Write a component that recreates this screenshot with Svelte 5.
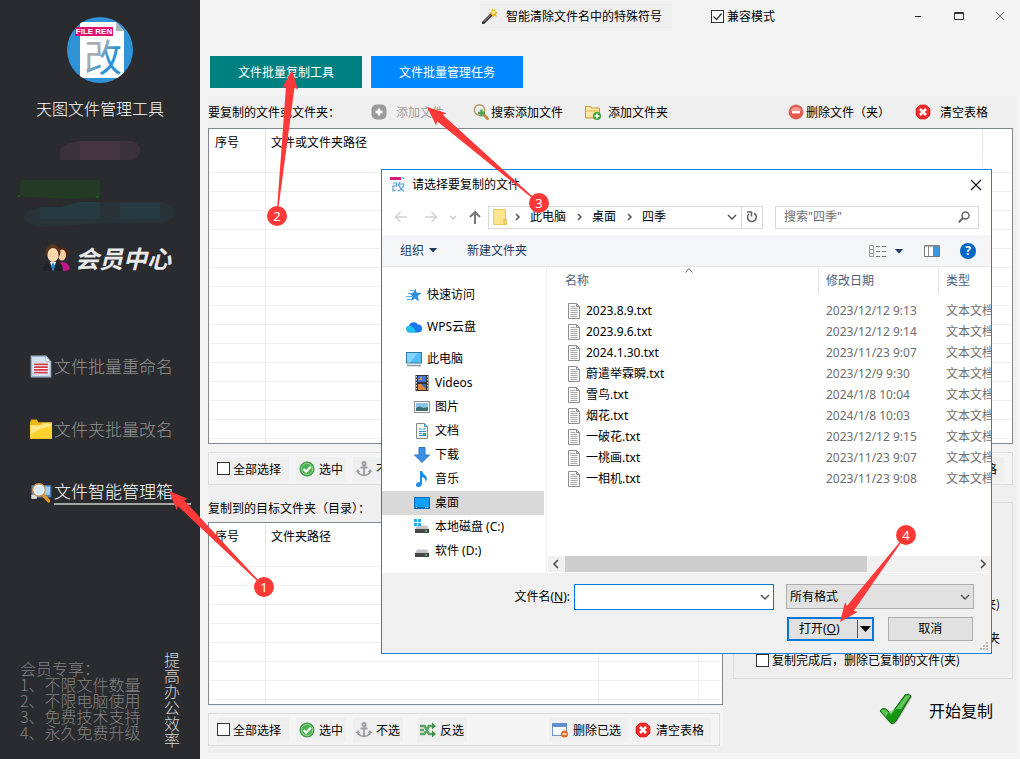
<script>
  const files = [
    ['2023.8.9.txt', '2023/12/12 9:13'],
    ['2023.9.6.txt', '2023/12/12 9:14'],
    ['2024.1.30.txt', '2023/11/23 9:07'],
    ['蔚遣举霖瞬.txt', '2023/12/9 9:30'],
    ['雪鸟.txt', '2024/1/8 10:04'],
    ['烟花.txt', '2024/1/8 10:03'],
    ['一破花.txt', '2023/12/12 9:15'],
    ['一桃画.txt', '2023/11/23 9:07'],
    ['一相机.txt', '2023/11/23 9:08']
  ];
  const places = [
    { icon: 'star', name: '快速访问', root: true },
    { icon: 'cloud', name: 'WPS云盘', root: true },
    { icon: 'pc', name: '此电脑', root: true },
    { icon: 'video', name: 'Videos' },
    { icon: 'picture', name: '图片' },
    { icon: 'doc', name: '文档' },
    { icon: 'down', name: '下载' },
    { icon: 'music', name: '音乐' },
    { icon: 'desktop', name: '桌面', selected: true },
    { icon: 'diskc', name: '本地磁盘 (C:)' },
    { icon: 'disk', name: '软件 (D:)' }
  ];
  const perks = ['1、不限文件数量', '2、不限电脑使用', '3、免费技术支持', '4、永久免费升级'];
  const steps = [
    { n: 1, x: 264, y: 587, tip: [169, 491] },
    { n: 2, x: 277, y: 216, tip: [292, 70] },
    { n: 3, x: 539, y: 203, tip: [427, 107] },
    { n: 4, x: 906, y: 535, tip: [840, 622] }
  ];

  // Tapered arrow from the badge centre to the tip.
  function arrow({ x, y, tip: [tx, ty] }) {
    const d = Math.hypot(x - tx, y - ty);
    const ux = (x - tx) / d, uy = (y - ty) / d;
    const at = (along, side) =>
      `${(tx + ux * along - uy * side).toFixed(1)},${(ty + uy * along + ux * side).toFixed(1)}`;
    return [at(0, 0), at(19, 8), at(17, 4.3), at(d - 9, 0.7), at(d - 9, -0.7), at(17, -4.3), at(19, -8)].join(' ');
  }
</script>

{#snippet icon(name)}
  <svg class="ico" viewBox="0 0 16 16" width="16" height="16" aria-hidden="true">
    {#if name === 'wand'}
      <path d="M1 15 10 6" stroke="#333" stroke-width="3" stroke-linecap="round" /><path d="M2 13.500 9 6.500" stroke="#999" stroke-width="1" />
      <path d="m10 0 1.200 2.200L13.500 1l-.3 2.500L16 4.500l-2.300 1.300L15 8.500l-2.800-.7L10.500 10 10 7 7 5l2.500-1z" fill="#f7b21a" /><circle cx="11.500" cy="4.500" r="1.800" fill="#ffe98a" />
    {:else if name === 'add'}
      <rect x=".5" y=".5" width="15" height="15" rx="5" fill="#9b9b9b" /><path d="M8 4.500v7M4.500 8h7" stroke="#fff" stroke-width="2.400" />
    {:else if name === 'search'}
      <circle cx="6.500" cy="6" r="5.200" fill="#e8f2e8" stroke="#b69a60" stroke-width="1.400" /><path d="m11 11 3.500 3.500" stroke="#c08a4a" stroke-width="3" stroke-linecap="round" /><path d="M8.500 5.500v7M5 9h7" stroke="#4fa552" stroke-width="2.400" />
    {:else if name === 'folderadd'}
      <path d="M.5 2.500h5l1 1.500h8v10H.5z" fill="#fbe9a4" stroke="#c99a2c" /><path d="M1 7h13" stroke="#dcb64d" /><circle cx="12" cy="12" r="4" fill="#3d9a35" /><path d="M12 9.500v5M9.500 12h5" stroke="#fff" stroke-width="1.500" />
    {:else if name === 'minus'}
      <circle cx="8" cy="8" r="7" fill="#e8584a" stroke="#c8695f" /><path d="M2.500 6.500a6 6 0 0 1 11 0q-5 2-11 0" fill="#f39a8d" /><path d="M4 8.200h8" stroke="#fff" stroke-width="2.400" />
    {:else if name === 'clear'}
      <path d="M5 1.200h6L14.800 5v6L11 14.800H5L1.200 11V5z" fill="#f42a2a" stroke="#e01010" /><path d="m5 5 6 6m0-6-6 6" stroke="#fff" stroke-width="2.600" />
    {:else if name === 'ok'}
      <circle cx="8" cy="8" r="7" fill="#4bb04f" stroke="#2f8f3b" /><circle cx="8" cy="8" r="5.600" fill="none" stroke="#a8dba5" stroke-width=".8" /><path d="m4.500 8 2.700 2.700 4.500-5" fill="none" stroke="#fff" stroke-width="2.200" />
    {:else if name === 'anchor'}
      <g fill="none" stroke="#9a9da1" stroke-width="1.800"><circle cx="8" cy="2.700" r="1.700" /><path d="M8 4.500V14M4.500 6.500h7M1.500 9.500Q2 14 8 14.300 14 14 14.500 9.500" /></g><path d="m0 11 2-3 2.200 3zM11.800 11 14 8l2 3z" fill="#9a9da1" />
    {:else if name === 'shuffle'}
      <g fill="none" stroke="#5aa564" stroke-width="2.600"><path d="M0 4h4.500L9 12h4M0 12h4.500L9 4h4M0 8h4" /></g><path d="m12 .5 4 3.500-4 3.500zM12 8.500l4 3.500-4 3.500z" fill="#3f8c4c" />
    {:else if name === 'windel'}
      <rect x=".5" y="1.500" width="14" height="12" fill="#f8fbff" stroke="#6d93c4" /><path d="M0 1h15v4H0z" fill="#5e90cf" /><circle cx="12.500" cy="12" r="3.500" fill="#e36b1c" /><path d="M10.500 12h4" stroke="#fff" stroke-width="1.400" />
    {:else if name === 'star'}
      <path d="m9.500 1.500 1.200 4.300 5 .2-4 3 1.300 5.500L9 11.500 5 14l1.500-4.800L3.200 6l4-.2z" fill="#2e8fdc" /><path d="M0 9.500h6M1 12.500h4M2 6.500h5M4 3.500h4" stroke="#4aaef0" />
    {:else if name === 'cloud'}
      <path d="M3.500 13.500a3.400 3.400 0 0 1-.5-6.700 5 5 0 0 1 9-1.300A4 4 0 0 1 12 13.500z" fill="#1779f2" /><path d="M3.500 13.500a3.400 3.400 0 0 1 0-6.800q4 0 6.500 6.800z" fill="#1fc4ea" />
    {:else if name === 'pc'}
      <rect x=".5" y="1.500" width="15" height="10.500" fill="#54bdf7" stroke="#33789f" /><path d="m6 2 6 0-8 9.500H1V2z" fill="#84d3fb" /><path d="M1 14.500h14" stroke="#8296a5" stroke-width="1.500" />
    {:else if name === 'video'}
      <path d="M1.500 0h13v16h-13z" fill="#333" /><path d="M2.500 1v14M13.500 1v14" stroke="#ddd" stroke-width="1" stroke-dasharray="1.500 1.500" /><path d="M4 1h8v6H4z" fill="#4375d6" /><path d="M4 5h4V1zM4 9h8v6H4z" fill="#e18a35" /><path d="M7 9h5v5z" fill="#3c63c9" />
    {:else if name === 'picture'}
      <path d="M.5 2.500h15v11H.5z" fill="#fff" stroke="#8b8b8b" /><path d="M2 4h12v8H2z" fill="#8cc4ec" /><path d="M2 9q4-3 7 0l5-1v4H2z" fill="#3b6f70" />
    {:else if name === 'doc'}
      <path d="M2.500.5h8l3 3v12h-11z" fill="#fff" stroke="#888" /><path d="M10.500.5v3h3M5 6h3M9 6h3M5 8.500h7M5 10.500h3M5 12.500h7" fill="none" stroke="#2f8fd0" /><path d="M9 10h3v2H9z" fill="#4d9b6a" />
    {:else if name === 'down'}
      <path d="M5 .5h6V8h4.500L8 15.500.5 8H5z" fill="#3a8fe0" stroke="#2d76c0" />
    {:else if name === 'music'}
      <path d="M6 0h2q1 3 4 5 2 3-.5 6Q12 7 8 6v7q-.5 3-3.500 3T2 13.500Q2.500 11 6 11z" fill="#1c8fe8" />
    {:else if name === 'desktop'}
      <path d="M.5 2.500h15v11H.5z" fill="#12a0ff" stroke="#0a6ab5" /><path d="M1 12.500h14" stroke="#0874c8" /><path d="M2 12.500h2M11 12.500h3" stroke="#fff" stroke-dasharray="1 1" />
    {:else if name === 'diskc' || name === 'disk'}
      <path d="m3 6.500h10l2 3.500H1z" fill="#c3c6c8" /><path d="M1 10h14v4H1z" fill="#444" /><path d="M11 12h2" stroke="#4fe05c" stroke-width="1.500" />
      {#if name === 'diskc'}<path d="M0 0h3v3H0zM4 0h3v3H4zM0 4h3v3H0zM4 4h3v3H4z" fill="#1bb1ec" />{/if}
    {:else if name === 'txt'}
      <path d="M2.500.5h8l3 3v12h-11z" fill="#fafafa" stroke="#8c8c8c" /><path d="M10.500.5v3h3" fill="none" stroke="#8c8c8c" /><path d="M4.500 3.500h5M4.500 5.500h7M4.500 7.500h7M4.500 9.500h7M4.500 11.500h7M4.500 13.500h7" stroke="#a9a9a9" />
    {:else if name === 'rename'}
      <path d="M1 .5h10.500l3.500 4v11H1z" fill="#d3e0f2" stroke="#9fb4cf" /><path d="M11.500.5v4H15z" fill="#fff" stroke="#9fb4cf" stroke-width=".6" /><path d="M2.500 5.500h11v8h-11z" fill="#f5f7fb" /><path d="M3 6.500h10M3 8.500h10M3 10.500h10M3 12.500h10" stroke="#d03a4a" stroke-width="1.200" />
    {:else if name === 'folder'}
      <path d="M0 3 1 1h4l1 2h10v12H0z" fill="#efb612" /><path d="M0 5h8l1-1.500h7V15H0z" fill="#ffd22e" /><path d="M.5 5.500H8l1-1.500h6.500v2Q7 7 .5 12z" fill="#ffe98c" />
    {:else if name === 'toolbox'}
      <path d="M1 3h14.500v9H1z" fill="#4d7fb0" /><path d="M9 4h5.500v6H9z" fill="#9fd0f2" /><path d="M1 10h4v3H1z" fill="#ddd" /><path d="m9 9.500 4.500 5" stroke="#e59525" stroke-width="2.400" stroke-linecap="round" /><circle cx="6.500" cy="6.500" r="3.600" fill="#cfeafc" stroke="#eee" stroke-width="1.400" /><circle cx="6.500" cy="6.500" r="4.600" fill="none" stroke="#d59239" stroke-width=".8" />
    {/if}
  </svg>
{/snippet}

{#snippet chev(cls)}
  <svg class="chev {cls}" viewBox="0 0 10 10" width="10" height="10" aria-hidden="true"><path d={cls === 'east small' ? 'm2 4 3 3 3-3' : 'm1 3 4 4 4-4'} fill="none" stroke="currentColor" stroke-width="1.500" /></svg>
{/snippet}

{#snippet grid(cols, heads, rows)}
  <div class="listbox">
    <table>
      <colgroup>{#each cols as c}<col style:width={c} />{/each}</colgroup>
      <thead><tr>{#each heads as h}<th>{h}</th>{/each}</tr></thead>
      <tbody>
        {#each Array(rows) as _}<tr>{#each cols as _c}<td></td>{/each}</tr>{/each}
        <tr class="rest">{#each cols as _c}<td></td>{/each}</tr>
      </tbody>
    </table>
  </div>
{/snippet}

<div class="app">
  <aside>
    <svg class="logo" viewBox="0 0 66 66" width="66" height="66" role="img" aria-label="FILE REN 改">
      <defs>
        <clipPath id="disc"><circle cx="33" cy="33" r="33" /></clipPath>
        <linearGradient id="ink" x1="0" y1="0" x2="1" y2="1"><stop offset=".4" stop-color="#a9adb2" /><stop offset=".6" stop-color="#2f93d8" /></linearGradient>
      </defs>
      <g clip-path="url(#disc)">
        <path d="M0 0h66v66H0z" fill="#2f93d8" />
        <path d="M13 5h36l8 9v47H13z" fill="#fff" /><path d="M49 5v9h8z" fill="#a9b4bb" />
        <path d="M8 10h38v9H8z" fill="#e0116f" />
      </g>
      <text x="27" y="17" text-anchor="middle" class="ren">FILE REN</text>
      <text x="36" y="54" text-anchor="middle" class="gai">改</text>
    </svg>
    <h1>天图文件管理工具</h1>
    <svg class="smudge" viewBox="0 0 200 92" width="200" height="92" aria-hidden="true">
      <path d="M60 10q8-7 20-8h52q8 2 8 9-1 9-8 10H60z" fill="#3b3138" /><path d="M80 2h40v19H80z" fill="#44353e" />
      <path d="M20 43l2-2h78v17l-30 2-50-3z" fill="#233b24" /><path d="M18 57h1.500M96 58h3" stroke="#0b8a0b" />
      <path d="M24 76q2-6 16-7l20-1q20-5 40-5h60q14 3 14 12-2 8-14 9l-70 1-50 3q-18-3-16-12" fill="#293337" /><path d="M40 68h20l20-5h20v17H40zM120 64h40v16h-40z" fill="#263b41" />
    </svg>
    <a class="member" href="#member">
      <svg viewBox="0 0 30 28" width="30" height="28" aria-hidden="true">
        <path d="M16 27q0-9 6-9 6 1 7 7l-4 2z" fill="#c3168a" /><circle cx="21" cy="9" r="6.500" fill="#4a2516" /><ellipse cx="21" cy="11" rx="4" ry="5.500" fill="#f6cda2" />
        <path d="M2 27q0-8 7-10h7q6 2 6 10z" fill="#20232d" /><circle cx="12" cy="8" r="7.500" fill="#5a341d" /><ellipse cx="12" cy="11" rx="5.500" ry="7" fill="#fbd9ae" /><path d="m9 18 3 9 3-9z" fill="#fff" /><path d="m12 18 2 4-2 5-2-5z" fill="#1b86d6" />
      </svg>
      <span>会员中心</span>
    </a>
    <nav>
      <a href="#rename">{@render icon('rename')}<span>文件批量重命名</span></a>
      <a href="#folders">{@render icon('folder')}<span>文件夹批量改名</span></a>
      <a href="#toolbox" class="current">{@render icon('toolbox')}<span>文件智能管理箱</span></a>
    </nav>
    <footer>
      <div class="perks">会员专享：{#each perks as p}<div>{p}</div>{/each}</div>
      <div class="slogan">提高办公效率</div>
    </footer>
  </aside>

  <main>
    <header>
      <button class="clean">{@render icon('wand')}智能清除文件名中的特殊符号</button>
      <label class="check compat"><input type="checkbox" checked />兼容模式</label>
      <div class="winbtns">
        <button aria-label="最小化"><svg viewBox="0 0 10 10" width="10" height="10"><path d="M2 5.500h6" stroke="#222" /></svg></button>
        <button aria-label="最大化"><svg viewBox="0 0 10 10" width="10" height="10"><path d="M.5 1.500h9v7h-9zM0 2.500h10" fill="none" stroke="#333" /></svg></button>
        <button aria-label="关闭"><svg viewBox="0 0 10 10" width="10" height="10"><path d="m1 1 8 8m0-8-8 8" stroke="#666" /></svg></button>
      </div>
    </header>
    <div class="tabs">
      <button class="teal">文件批量复制工具</button>
      <button class="blue">文件批量管理任务</button>
    </div>

    <section class="panel">
      <div class="toolbar">
        <span class="caption">要复制的文件或文件夹：</span>
        <button class="wide" disabled>{@render icon('add')}添加文件</button>
        <button class="tight">{@render icon('search')}搜索添加文件</button>
        <button class="mid">{@render icon('folderadd')}添加文件夹</button>
        <button class="tight right">{@render icon('minus')}删除文件（夹）</button>
        <button class="wide">{@render icon('clear')}清空表格</button>
      </div>
      {@render grid(['56px', 'auto', '28px'], ['序号', '文件或文件夹路径', ''], 15)}
      <div class="strip">
        <div class="actions">
          <label class="check"><input type="checkbox" />全部选择</label>
          <button>{@render icon('ok')}选中</button>
          <button>{@render icon('anchor')}不选</button>
          <button class="right last">{@render icon('clear')}清空表格</button>
        </div>
      </div>
      <div class="lower">
        <div class="targets">
          <div class="caption target">复制到的目标文件夹（目录）：</div>
          {@render grid(['56px', 'auto', '100px', '22px'], ['序号', '文件夹路径', '', ''], 8)}
          <div class="strip narrow">
            <div class="actions">
              <label class="check"><input type="checkbox" />全部选择</label>
              <button>{@render icon('ok')}选中</button>
              <button>{@render icon('anchor')}不选</button>
              <button class="invert">{@render icon('shuffle')}反选</button>
              <button class="right last">{@render icon('windel')}删除已选</button>
              <button class="last">{@render icon('clear')}清空表格</button>
            </div>
          </div>
        </div>
        <div class="side">
          <div class="options">
            <span class="tail">(夹)</span>
            <span class="tail second">夹</span>
            <label class="check"><input type="checkbox" />复制完成后，删除已复制的文件(夹)</label>
          </div>
          <button class="start">
            <svg viewBox="0 0 34 34" width="34" height="34" aria-hidden="true">
              <path d="M2 19q2-5 6-3l5 5L27 3q4-3 6 1L18 29q-4 5-8 0z" fill="#777" opacity=".5" />
              <path d="M1 18q2-4 6-2l5 5L26 2q4-2 6 1L17 28q-4 5-7 0z" fill="#15960f" stroke="#0c6a0c" />
              <path d="M2 18q2-3 5-1l5 5L27 2.500q3-1 4 .8L22 16q-12-1-15 8z" fill="#7fd074" opacity=".75" />
            </svg>
            开始复制
          </button>
        </div>
      </div>
    </section>
  </main>

  <div class="dialog" role="dialog" aria-labelledby="dlg-title">
    <div class="title">
      <svg viewBox="0 0 16 16" width="16" height="16" aria-hidden="true"><path d="M2 1h12v14H2z" fill="#f3f6f9" /><path d="M0 0h11v3H0z" fill="#d81b78" /><path d="m12 0 2 2M3 6h3.500v3H3v5l3-1M10 5 8 8.500M9 7h5q-1 5-6 7M9 8q2 5 5 6" fill="none" stroke="#58a5d8" stroke-width="1.200" /></svg>
      <span id="dlg-title">请选择要复制的文件</span>
      <button aria-label="关闭"><svg viewBox="0 0 12 12" width="12" height="12"><path d="m1 1 10 10m0-10L1 11" stroke="#111" stroke-width="1.200" /></svg></button>
    </div>
    <div class="navbar">
      <svg viewBox="0 0 14 14" width="14" height="14" aria-hidden="true"><path d="M13 7H1.500m5-5-5 5 5 5" fill="none" stroke="#d5d5d5" stroke-width="1.500" /></svg>
      <svg class="fwd" viewBox="0 0 14 14" width="14" height="14" aria-hidden="true"><path d="M1 7h11.500m-5-5 5 5-5 5" fill="none" stroke="#d5d5d5" stroke-width="1.500" /></svg>
      <svg class="faint" viewBox="0 0 10 10" width="10" height="10" aria-hidden="true"><path d="m2 4 3 3 3-3" fill="none" stroke="#ccc" stroke-width="1.500" /></svg>
      <svg class="up" viewBox="0 0 14 14" width="14" height="14" aria-hidden="true"><path d="M7 14V2M2 7l5-5 5 5" fill="none" stroke="#777" stroke-width="2" /></svg>
      <div class="address">
        <svg class="here" viewBox="0 0 14 16" width="14" height="16" aria-hidden="true"><path d="M.5.500h12v15H.5z" fill="#fbe38f" stroke="#e8c860" /><path d="M11 10h2.500v5.500H11z" fill="#f6d66e" stroke="#d9b54a" stroke-width=".7" /></svg>
        {@render chev('east small')}<span>此电脑</span>
        {@render chev('east small')}<span>桌面</span>
        {@render chev('east small')}<span>四季</span>
        {@render chev('push')}
        <button aria-label="刷新"><svg viewBox="0 0 12 12" width="12" height="12"><path d="M2.800 3A4.400 4.400 0 1 0 8 2.200" fill="none" stroke="#666" stroke-width="1.600" /><path d="M1 1h4.500v4.500" fill="none" stroke="#666" stroke-width="1.600" /></svg></button>
      </div>
      <div class="search">
        <input type="text" aria-label="搜索" placeholder={'搜索"四季"'} />
        <svg viewBox="0 0 12 12" width="12" height="12" aria-hidden="true"><circle cx="7.500" cy="4.500" r="3.500" fill="none" stroke="#666" stroke-width="1.500" /><path d="M5 7 .7 11.300" stroke="#666" stroke-width="2" /></svg>
      </div>
    </div>
    <div class="cmdbar">
      <button>组织 <svg viewBox="0 0 8 5" width="8" height="5"><path d="M0 0h8L4 4.500z" fill="#1f3a66" /></svg></button>
      <button class="newf">新建文件夹</button>
      <button class="view" aria-label="视图"><svg viewBox="0 0 34 14" width="34" height="14"><path d="M.5 1.500h4v11h-4zM0 5.500h5M0 9.500h5" fill="none" stroke="#999" /><path d="M7 2.500h4m2 0h4M7 7.500h4m2 0h4M7 12.500h4m2 0h4" stroke="#777" /><path d="M26 5h8l-4 4.500z" fill="#1f3a66" /></svg></button>
      <button class="pane" aria-label="预览窗格"><svg viewBox="0 0 16 12" width="16" height="12"><path d="M.5.500h15v11H.5z" fill="#fff" stroke="#777" /><path d="M9 1h6v10H9z" fill="#3b97df" /><path d="M4.500 1v10M0 1h16" stroke="#888" /></svg></button>
      <button class="help" aria-label="帮助">?</button>
    </div>
    <div class="body">
      <ul class="places">
        {#each places as p}
          <li class:root={p.root} class:selected={p.selected}>{@render icon(p.icon)}<span>{p.name}</span></li>
        {/each}
      </ul>
      <div class="files">
        <table>
          <colgroup><col /><col style:width="120px" /><col style:width="52px" /></colgroup>
          <thead><tr><th>名称<svg class="sort" viewBox="0 0 8 5" width="8" height="5"><path d="m.5 4.500 3.500-4 3.500 4" fill="none" stroke="#666" /></svg></th><th>修改日期</th><th>类型</th></tr></thead>
          <tbody>
            {#each files as [name, date]}
              <tr><td><div class="fname">{@render icon('txt')}<span>{name}</span></div></td><td>{date}</td><td>文本文档</td></tr>
            {/each}
          </tbody>
        </table>
        <div class="scroll">{@render chev('west')}<div class="thumb"></div>{@render chev('east')}</div>
      </div>
    </div>
    <div class="foot">
      <label for="fname">文件名(<u>N</u>):</label>
      <div class="combo name"><input id="fname" type="text" />{@render chev('')}</div>
      <div class="combo kind"><select aria-label="格式"><option>所有格式</option></select>{@render chev('')}</div>
      <div class="buttons">
        <button class="open"><span>打开(<u>O</u>)</span><svg viewBox="0 0 14 18" width="14" height="18"><path d="M.5 0v18" stroke="#555" /><path d="M3 6h11L8.500 12z" fill="#000" /></svg></button>
        <button>取消</button>
      </div>
      <svg class="grip" viewBox="0 0 9 9" width="9" height="9" aria-hidden="true"><path d="M6 0h2v2H6zM3 3h2v2H3zM6 3h2v2H6zM0 6h2v2H0zM3 6h2v2H3zM6 6h2v2H6z" fill="#bbb" /></svg>
    </div>
  </div>

  <svg class="arrows" aria-hidden="true">
    {#each steps as s}<polygon points={arrow(s)} />{/each}
  </svg>
  {#each steps as s}<span class="badge" style:left="{s.x}px" style:top="{s.y}px">{s.n}</span>{/each}
</div>

<style>
  :global(body) { margin: 0; }
  .app, .app * { box-sizing: border-box; }
  .app {
    position: relative; display: flex; min-height: 100vh; overflow: hidden;
    font: 12px/16px "Noto Sans", "Noto Sans CJK SC", sans-serif; color: #000; background: #f4f4f4;
  }
  button, input, select { font: inherit; color: inherit; margin: 0; padding: 0; border: 0; background: none; border-radius: 0; }
  button { display: flex; align-items: center; white-space: nowrap; }
  svg { flex: none; display: block; }
  a { color: inherit; text-decoration: none; }

  aside { width: 200px; flex: none; background: #2a2b2f; display: flex; flex-direction: column; padding-top: 17px; font-family: "Noto Sans CJK SC", sans-serif; font-weight: 300; }
  .logo { align-self: center; }
  .ren { font: 700 8px "Liberation Sans", sans-serif; fill: #fff; }
  .gai { font: 400 38px "Noto Sans CJK SC", sans-serif; fill: url(#ink); }
  h1 { font-size: 16px; line-height: 20px; font-weight: 300; color: #fff; text-align: center; margin: 15px 0 21px; }
  .member { display: flex; align-items: center; gap: 4px; margin: 12px 0 0 41px; height: 30px; color: #e8e8e8; font-size: 24px; font-weight: 700; font-style: italic; }
  nav { display: flex; flex-direction: column; gap: 39px; margin-top: 81px; padding-left: 30px; }
  nav a { display: flex; align-items: center; gap: 2px; height: 24px; font-size: 17px; color: #929292; }
  nav .ico { width: 22px; height: 22px; }
  nav a:first-child .ico { height: 25px; }
  nav .current { color: #fff; }
  nav .current span { border-bottom: 2px solid #a5a5a5; padding: 4px 18px 4px 0; }
  aside footer { display: flex; align-items: flex-end; gap: 24px; margin-top: auto; padding: 0 0 12px 20px; font-size: 16px; line-height: 16px; color: #828282; }
  .perks { width: 120px; white-space: nowrap; padding-bottom: 8px; }
  .slogan { writing-mode: vertical-rl; color: #d5d5d5; }

  main { flex: 1; min-width: 0; font-family: "Noto Sans CJK SC", sans-serif; }
  header { display: flex; align-items: center; height: 32px; }
  .clean { margin-left: 280px; height: 30px; padding: 0 10px 0 2px; gap: 8px; background: #efefef; }
  .check { display: flex; align-items: center; gap: 3px; white-space: nowrap; }
  .check input { appearance: none; flex: none; width: 13px; height: 13px; border: 1px solid #333; background: #fff; }
  .check input:checked { background: #fff url("data:image/svg+xml,%3Csvg xmlns='http://www.w3.org/2000/svg' viewBox='0 0 11 11'%3E%3Cpath d='m1.500 5.500 3 3 5-6' fill='none' stroke='%23333' stroke-width='1.300'/%3E%3C/svg%3E"); }
  .compat { margin-left: 39px; }
  .winbtns { display: flex; margin-left: auto; }
  .winbtns button { width: 41px; height: 32px; justify-content: center; }
  .tabs { display: flex; gap: 9px; padding: 24px 10px 8px; }
  .tabs button { width: 152px; height: 32px; justify-content: center; color: #fff; }
  .teal { background: #008080; }
  .blue { background: #0089ff; }
  .panel { margin: 0 3px 7px 8px; padding: 0 4px 7px 0; background: #efefef; }
  .toolbar { display: flex; align-items: center; height: 32px; padding-right: 25px; }
  .caption { white-space: nowrap; }
  .wide { gap: 9px; }
  .mid { gap: 7px; }
  .tight { gap: 2px; }
  .toolbar .caption { margin-right: 31px; }
  .toolbar .tight { margin-left: 29px; }
  .toolbar .mid { margin-left: 22px; }
  .toolbar .right { margin-left: auto; margin-right: 25px; }
  .toolbar button:disabled { color: #a0a0a0; }
  .right { margin-left: auto; }

  .listbox { border: 1px solid #828790; background: #fff; padding: 0 1px; }
  table { width: 100%; table-layout: fixed; border-collapse: separate; border-spacing: 0; }
  th { font-weight: 400; text-align: left; white-space: nowrap; }
  .listbox th { height: 25px; padding: 0 5px; border-right: 1px solid #e5e5e5; }
  .listbox td { height: 19px; padding: 0; border-right: 1px solid #eee; border-bottom: 1px solid #eee; }
  .listbox tr > :last-child { border-right: 0; }
  .listbox .rest td { height: 4px; border-bottom: 0; }

  .strip { padding-top: 8px; background: #f4f4f4; }
  .narrow { padding-right: 3px; }
  .actions { display: flex; align-items: center; gap: 7px; height: 33px; padding: 0 8px; border: 1px solid #dcdcdc; background: #f4f4f4; }
  .actions > * { height: 24px; padding: 0 3px; gap: 4px; background: #efefef; }
  .actions .check { padding: 0 8px 0 0; gap: 3px; }
  .actions .invert { margin-left: 7px; }
  .actions .right { margin-left: auto; }
  .actions .last { padding: 0 7px 0 3px; gap: 5px; }
  .actions .last + .last { margin-left: -3px; }
  .lower { display: flex; gap: 10px; }
  .targets { flex: 515; min-width: 0; }
  .target { height: 37px; padding-top: 15px; }
  .side { flex: 280; min-width: 0; padding-top: 17px; }
  .options { height: 177px; border: 1px solid #dcdcdc; display: flex; flex-direction: column; justify-content: flex-end; padding: 0 12px 10px 22px; }
  .tail { align-self: flex-end; margin-bottom: 18px; }
  .tail.second { margin-bottom: 6px; }
  .start { margin: 14px 20px 0 auto; gap: 16px; font-size: 16px; line-height: 20px; }

  .dialog { position: absolute; left: 381px; top: 169px; width: 611px; border: 1px solid #1883d7; background: #fff; }
  .title { display: flex; align-items: center; gap: 6px; height: 30px; padding: 0 9px 0 8px; }
  .title button { margin-left: auto; }
  .navbar { display: flex; align-items: center; height: 35px; padding: 0 12px 1px; }
  .fwd { margin: 0 10px 0 16px; }
  .up { margin: 0 6px 0 10px; }
  .chev { color: #555; }
  .east { transform: rotate(-90deg); }
  .west { transform: rotate(90deg); }
  .address { flex: 1; min-width: 0; display: flex; align-items: center; height: 23px; border: 1px solid #d9d9d9; padding-left: 4px; }
  .here { margin-right: -3px; }
  .address .east { margin: 0 8px; }
  .push { margin: 0 4px 0 auto; }
  .address button { width: 21px; height: 21px; justify-content: center; border-left: 1px solid #d9d9d9; }
  .search { flex: 0 0 202px; display: flex; align-items: center; height: 23px; margin-left: 12px; border: 1px solid #d9d9d9; padding: 0 8px; }
  .search input { flex: 1; min-width: 0; outline: 0; }
  .search input::placeholder { color: #6d6d6d; opacity: 1; }
  .cmdbar { display: flex; align-items: center; height: 32px; padding: 0 15px 0 18px; background: #f5f6f7; border-bottom: 1px solid #e6e7e9; color: #1e395b; }
  .cmdbar button { gap: 5px; }
  .newf { margin-left: 30px; }
  .view { margin-left: auto; }
  .pane { margin: 0 20px 0 21px; }
  .cmdbar .help { width: 16px; height: 16px; border-radius: 50%; background: #0067c5; color: #fff; font-weight: 700; justify-content: center; }
  .body { display: flex; height: 306px; }
  .places { list-style: none; margin: 0; padding: 16px 2px 0 0; width: 165px; flex: none; border-right: 1px solid #f0f0f0; }
  .places li { display: flex; align-items: center; gap: 5px; height: 24px; padding-left: 32px; white-space: nowrap; }
  .places .root { padding-left: 24px; margin-bottom: 8px; }
  .places .root:nth-child(3) { margin-bottom: 0; }
  .places .selected { background: #d9d9d9; }
  .files { flex: 1; min-width: 0; display: flex; flex-direction: column; }
  .files th { position: relative; height: 27px; padding: 0 7px; color: #4c607a; border-right: 1px solid #e5e5e5; }
  .files th:last-child { border-right: 0; }
  .files th:first-child { padding-left: 18px; }
  .sort { position: absolute; left: 51%; top: 1px; }
  .files tbody::before { content: ''; display: block; height: 6px; }
  .files td { height: 21px; padding: 0 7px; color: #6d6d6d; white-space: nowrap; overflow: hidden; }
  .files td:first-child { padding-left: 19px; }
  .files td:last-child, .files th:last-child { padding-right: 0; }
  .fname { display: flex; align-items: center; gap: 4px; color: #000; }
  .scroll { display: flex; align-items: center; gap: 4px; height: 16px; margin: auto 0 1px 1px; padding: 0 3px; background: #f0f0f0; }
  .scroll .chev { color: #444; }
  .thumb { height: 16px; width: 69%; background: #cdcdcd; }
  .scroll .east { margin-left: auto; }
  .foot { position: relative; display: grid; grid-template-columns: 188px 200fr 196fr; gap: 6px 4px; align-items: center; height: 80px; padding: 10px 17px 12px 0; background: #f0f0f0; }
  .foot label { text-align: right; }
  .combo { display: grid; align-items: center; height: 26px; }
  .combo > :global(*) { grid-area: 1 / 1; }
  .combo input { width: 100%; height: 26px; padding: 0 20px 0 4px; border: 1px solid #0078d7; background: #fff; outline: 0; }
  .combo select { appearance: none; width: 100%; height: 25px; padding: 0 20px 0 3px; border: 1px solid #adadad; background: #e1e1e1; }
  .combo .chev { justify-self: end; margin-right: 4px; pointer-events: none; }
  .kind { margin-left: 8px; }
  .buttons { grid-column: 3; display: flex; gap: 14px; margin: 0 1px 0 9px; }
  .buttons button { flex: 1 1 50%; height: 24px; justify-content: center; border: 1px solid #adadad; background: #e1e1e1; }
  .buttons .open { border: 2px solid #0078d7; padding: 0 1px 0 10px; justify-content: space-between; }
  .grip { position: absolute; right: 2px; bottom: 2px; }

  .arrows { position: absolute; inset: 0; width: 100%; height: 100%; fill: #ff3838; pointer-events: none; }
  .badge { position: absolute; width: 20px; height: 20px; margin: -10px 0 0 -10px; border-radius: 50%; background: #ff3838; color: #fff; font-size: 13px; line-height: 20px; text-align: center; }
</style>
